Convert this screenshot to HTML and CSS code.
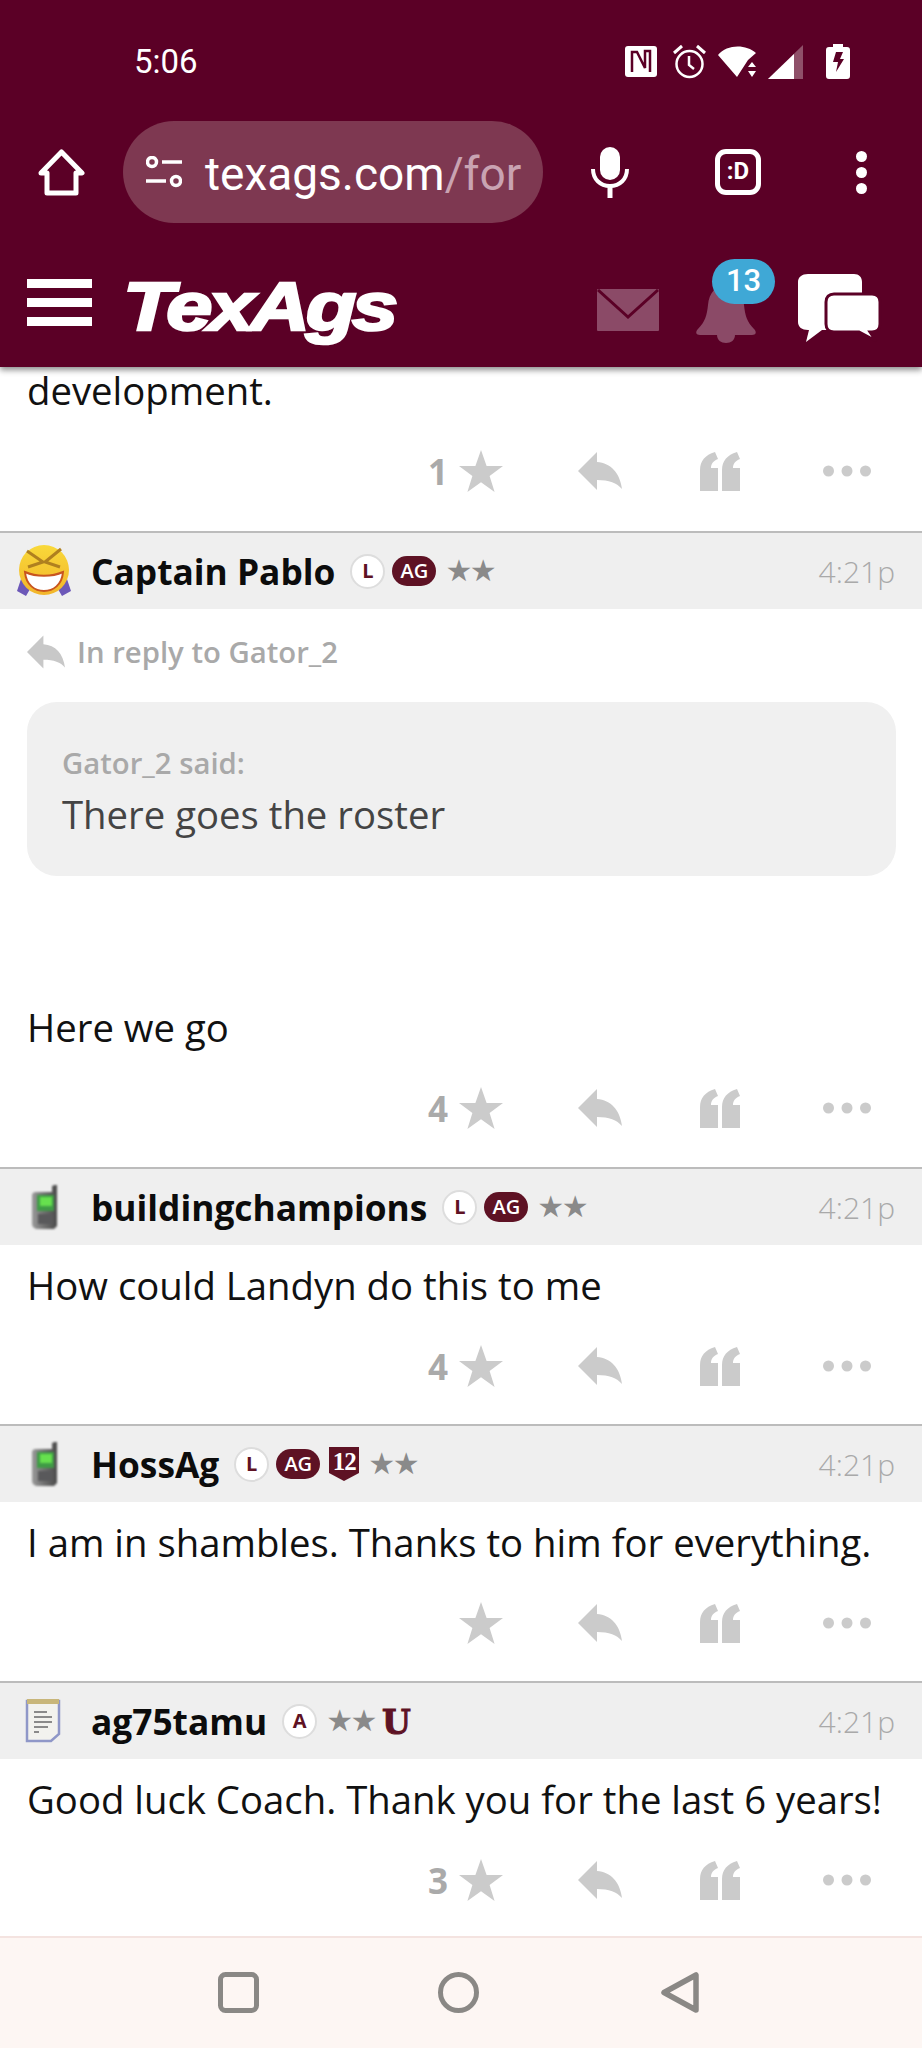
FILE: index.html
```html
<!DOCTYPE html>
<html lang="en">
<head>
    <meta charset="UTF-8">
    <meta name="viewport" content="width=device-width, initial-scale=1.0">
    <title>TexAgs</title>
    <link rel="stylesheet" href="styles.css">
</head>
<body>
    <!-- shared action icons -->
    <svg class="sprites" aria-hidden="true">
        <defs>
            <linearGradient id="phone-body" x1="0" y1="0" x2="1" y2="0">
                <stop offset="0" stop-color="#9a9a9a"/>
                <stop offset="0.5" stop-color="#6f6f6f"/>
                <stop offset="1" stop-color="#4a4a4a"/>
            </linearGradient>
            <linearGradient id="face" x1="0" y1="0" x2="0" y2="1">
                <stop offset="0" stop-color="#f9d93a"/>
                <stop offset="1" stop-color="#f2b52a"/>
            </linearGradient>
        </defs>
        <symbol id="i-star" viewBox="0 0 44 42"><path d="M22 0l5.600 16H44L30.600 26l5 16L22 32.200 8.400 42l5-16L0 16h16.400z"/></symbol>
        <symbol id="i-reply" viewBox="0 0 44 38"><path d="M19 0v10c14 1 23 11 25 27-5-6-13-9-25-9v10L0 19z"/></symbol>
        <symbol id="i-quote" viewBox="0 0 40 39"><path d="M0 39V18C0 9 5 3 15 0l3 7c-5 2-7 5-7 9h7v23zM22 39V18c0-9 5-15 15-18l3 7c-5 2-7 5-7 9h7v23z"/></symbol>
        <symbol id="i-dots" viewBox="0 0 48 12"><circle cx="5.500" cy="6" r="5.500"/><circle cx="24" cy="6" r="5.500"/><circle cx="42.500" cy="6" r="5.500"/></symbol>
        <symbol id="i-phone" viewBox="0 0 26 44">
            <path d="M20 1l5-2v42l-3 3H6c-3 0-6-2-6-5V10c0-2 2-3 4-3h16z" fill="url(#phone-body)"/>
            <rect x="5" y="10" width="17" height="16" fill="#3f9b45"/>
            <rect x="8" y="12" width="12" height="9" fill="#66e04e"/>
            <rect x="6" y="29" width="15" height="10" fill="#59595b"/>
        </symbol>
    </svg>

    <header class="top">
        <div class="status">
            <span class="clock">5:06</span>
            <div class="status-icons">
                <svg width="32" height="31" viewBox="0 0 32 31"><rect width="32" height="31" rx="3" fill="#fff"/><path d="M7 26V6h5l8 16V5h5v21" fill="none" stroke="#5b0026" stroke-width="2.500"/></svg>
                <svg width="33" height="35" viewBox="0 0 33 35"><circle cx="16.500" cy="20" r="13" fill="none" stroke="#fff" stroke-width="2.500"/><path d="M16 12v9l5 4" fill="none" stroke="#fff" stroke-width="2.500"/><path d="M1 9l8-7M32 9l-8-7" stroke="#fff" stroke-width="3"/></svg>
                <svg width="39" height="32" viewBox="0 0 39 32"><path d="M0 9C9-2 28-2 38 7l-8 7-11 17z" fill="#fff"/><path d="M34 16l4 5h-8zM34 31l4-6h-8z" fill="#fff"/></svg>
                <svg width="35" height="34" viewBox="0 0 35 34"><path d="M35 0v34H0z" fill="#8f5069"/><path d="M26 9v25H0z" fill="#fff"/></svg>
                <svg width="24" height="35" viewBox="0 0 24 35"><path d="M7 0h10v3h4c2 0 3 1 3 3v26c0 2-1 3-3 3H3c-2 0-3-1-3-3V6c0-2 1-3 3-3h4z" fill="#fff"/><path d="M10 8h7l-3 7h4l-8 13 2-10H7z" fill="#5b0026"/></svg>
            </div>
        </div>

        <div class="toolbar">
            <svg class="home" width="47" height="47" viewBox="0 0 47 47"><path d="M23.500 3L44 24h-6v20H9V24H3z" fill="none" stroke="#fff" stroke-width="5" stroke-linejoin="round"/></svg>
            <div class="url">
                <svg width="36" height="32" viewBox="0 0 36 32"><circle cx="6" cy="6" r="4.500" fill="none" stroke="#fff" stroke-width="3.500"/><path d="M16 6h20M0 25h20" stroke="#fff" stroke-width="3.500"/><circle cx="30" cy="25" r="4.500" fill="none" stroke="#fff" stroke-width="3.500"/></svg>
                <span class="url-text">texags.com<span class="url-path">/for</span></span>
            </div>
            <svg class="mic" width="38" height="51" viewBox="0 0 38 51"><rect x="9" y="0" width="20" height="33" rx="10" fill="#fff"/><path d="M2 22c0 10 7 17 17 17s17-7 17-17" fill="none" stroke="#fff" stroke-width="4"/><path d="M19 38v13" stroke="#fff" stroke-width="5"/></svg>
            <div class="tabs">:D</div>
            <div class="kebab"><i></i><i></i><i></i></div>
        </div>

        <nav class="site">
            <div class="burger"><i></i><i></i><i></i></div>
            <span class="logo">TexAgs</span>
            <svg class="mail" width="62" height="42" viewBox="0 0 62 42"><rect width="62" height="42" rx="1" fill="#8b4a67"/><path d="M1 1l30 27L61 1" fill="none" stroke="#5b0026" stroke-width="3"/></svg>
            <div class="bell">
                <svg width="62" height="58" viewBox="0 0 62 58"><path d="M31 0c10 0 17 8 18 20 1 10 3 17 10 24 3 3 2 6-2 6H5c-4 0-5-3-2-6 7-7 9-14 10-24C14 8 21 0 31 0z" fill="#8b4a67"/><path d="M22 50h18c0 5-4 8-9 8s-9-3-9-8z" fill="#8b4a67"/></svg>
                <span class="badge">13</span>
            </div>
            <svg class="chat" width="82" height="67" viewBox="0 0 82 67"><path d="M10 0h46c5 0 8 3 8 8v40c0 5-3 8-8 8H24L8 68l3-12h-1C4 56 0 53 0 48V8c0-5 4-8 10-8z" fill="#fff"/><path d="M36 20h38c5 0 8 3 8 8v22c0 5-3 8-8 8h-2l6 9-17-9H36c-5 0-8-3-8-8V28c0-5 3-8 8-8z" fill="#fff" stroke="#5b0026" stroke-width="3"/></svg>
        </nav>
    </header>

    <main class="thread">
        <article class="post post-cut">
            <p class="msg">development.</p>
            <div class="actions">
                <span class="likes"><b>1</b><svg class="act-star"><use href="#i-star"/></svg></span>
                <svg class="act-reply"><use href="#i-reply"/></svg>
                <svg class="act-quote"><use href="#i-quote"/></svg>
                <svg class="act-dots"><use href="#i-dots"/></svg>
            </div>
        </article>

        <article class="post">
            <div class="head">
                <svg class="avatar" width="56" height="56" viewBox="0 0 56 56">
                    <path d="M7 30L1 48l9 5 7-12zM49 30l6 18-9 5-7-12z" fill="#6c58b8"/>
                    <circle cx="28" cy="27" r="25" fill="url(#face)"/>
                    <path d="M11 8l16 11-15 5M45 6L29 19l15 5" fill="none" stroke="#b0801f" stroke-width="3"/>
                    <path d="M9 29c11 5 27 5 38 0-1 13-10 19-19 19S10 42 9 29z" fill="#fff" stroke="#c8551f" stroke-width="2"/>
                </svg>
                <span class="name">Captain Pablo</span>
                <span class="badges">
                    <span class="tag-round">L</span>
                    <span class="tag-ag">AG</span>
                    <span class="stars">★★</span>
                </span>
                <time>4:21p</time>
            </div>
            <div class="body">
                <div class="reply-to">
                    <svg class="reply-icon"><use href="#i-reply"/></svg>
                    <span>In reply to Gator_2</span>
                </div>
                <blockquote class="quote">
                    <div class="quote-by">Gator_2 said:</div>
                    <div class="quote-text">There goes the roster</div>
                </blockquote>
                <p class="msg">Here we go</p>
                <div class="actions">
                    <span class="likes"><b>4</b><svg class="act-star"><use href="#i-star"/></svg></span>
                    <svg class="act-reply"><use href="#i-reply"/></svg>
                    <svg class="act-quote"><use href="#i-quote"/></svg>
                    <svg class="act-dots"><use href="#i-dots"/></svg>
                </div>
            </div>
        </article>

        <article class="post">
            <div class="head">
                <svg class="avatar avatar-phone" width="56" height="44"><use href="#i-phone" x="16" width="26" height="44"/></svg>
                <span class="name">buildingchampions</span>
                <span class="badges">
                    <span class="tag-round">L</span>
                    <span class="tag-ag">AG</span>
                    <span class="stars">★★</span>
                </span>
                <time>4:21p</time>
            </div>
            <div class="body">
                <p class="msg">How could Landyn do this to me</p>
                <div class="actions">
                    <span class="likes"><b>4</b><svg class="act-star"><use href="#i-star"/></svg></span>
                    <svg class="act-reply"><use href="#i-reply"/></svg>
                    <svg class="act-quote"><use href="#i-quote"/></svg>
                    <svg class="act-dots"><use href="#i-dots"/></svg>
                </div>
            </div>
        </article>

        <article class="post">
            <div class="head">
                <svg class="avatar avatar-phone" width="56" height="44"><use href="#i-phone" x="16" width="26" height="44"/></svg>
                <span class="name">HossAg</span>
                <span class="badges">
                    <span class="tag-round">L</span>
                    <span class="tag-ag">AG</span>
                    <span class="tag-shield">
                        <svg width="30" height="34" viewBox="0 0 30 34"><path d="M0 0h30v26l-15 8-15-8z" fill="#5e1224"/></svg>
                        <span>12</span>
                    </span>
                    <span class="stars">★★</span>
                </span>
                <time>4:21p</time>
            </div>
            <div class="body">
                <p class="msg">I am in shambles. Thanks to him for everything.</p>
                <div class="actions">
                    <span class="likes"><svg class="act-star"><use href="#i-star"/></svg></span>
                    <svg class="act-reply"><use href="#i-reply"/></svg>
                    <svg class="act-quote"><use href="#i-quote"/></svg>
                    <svg class="act-dots"><use href="#i-dots"/></svg>
                </div>
            </div>
        </article>

        <article class="post">
            <div class="head">
                <svg class="avatar" width="56" height="46" viewBox="0 0 56 46">
                    <path d="M11 3h32v33l-8 7H11z" fill="#f2f2ee" stroke="#8f97c8" stroke-width="2.500"/>
                    <path d="M11 1h32v5H11z" fill="#c8b67a"/>
                    <path d="M18 14h13M18 19h18M18 24h18M18 29h14M18 34h5" stroke="#8a8a8a" stroke-width="2"/>
                </svg>
                <span class="name">ag75tamu</span>
                <span class="badges">
                    <span class="tag-round">A</span>
                    <span class="stars">★★</span>
                    <span class="tag-u">U</span>
                </span>
                <time>4:21p</time>
            </div>
            <div class="body">
                <p class="msg">Good luck Coach. Thank you for the last 6 years!</p>
                <div class="actions">
                    <span class="likes"><b>3</b><svg class="act-star"><use href="#i-star"/></svg></span>
                    <svg class="act-reply"><use href="#i-reply"/></svg>
                    <svg class="act-quote"><use href="#i-quote"/></svg>
                    <svg class="act-dots"><use href="#i-dots"/></svg>
                </div>
            </div>
        </article>
    </main>

    <footer class="sysnav">
        <svg width="41" height="41" viewBox="0 0 41 41"><rect x="2.500" y="2.500" width="36" height="36" rx="5" fill="none" stroke="#8a8885" stroke-width="5"/></svg>
        <svg width="41" height="41" viewBox="0 0 41 41"><circle cx="20.500" cy="20.500" r="18" fill="none" stroke="#8a8885" stroke-width="5"/></svg>
        <svg class="nav-back" width="38" height="41" viewBox="0 0 38 41"><path d="M35 3v35L3 20.500z" fill="none" stroke="#8a8885" stroke-width="5.500" stroke-linejoin="round"/></svg>
    </footer>
</body>
</html>
```

FILE: styles.css
```css
* {
    box-sizing: border-box;
}
html, body {
    margin: 0;
    padding: 0;
}
body {
    width: 922px;
    height: 2048px;
    display: flex;
    flex-direction: column;
    overflow: hidden;
    background: white;
    color: #111;
    font-family: "Open Sans", "Liberation Sans", sans-serif;
}
.sprites {
    position: absolute;
    width: 0;
    height: 0;
}

/* maroon block at the top */
.top {
    position: relative;
    z-index: 2;
    height: 367px;
    flex: none;
    background-color: #5b0026;
    box-shadow: 0 3px 6px rgba(0,0,0,0.45);
    color: white;
}
.status {
    height: 100px;
    display: flex;
    align-items: center;
    justify-content: space-between;
    padding: 23px 72px 0 134px;
}
.clock {
    font-family: Roboto, sans-serif;
    font-size: 33px;
}
.status-icons {
    display: flex;
    align-items: center;
}
.status-icons svg:nth-child(1) { margin-right: 16px; }
.status-icons svg:nth-child(2) { margin-right: 12px; }
.status-icons svg:nth-child(3) { margin-right: 11px; }
.status-icons svg:nth-child(4) { margin-right: 23px; }

.toolbar {
    height: 144px;
    display: flex;
    align-items: center;
    padding-left: 38px;
}
.url {
    width: 420px;
    height: 102px;
    margin-left: 38px;
    padding: 0 20px 0 23px;
    display: flex;
    align-items: center;
    gap: 23px;
    border-radius: 51px;
    background-color: #7e3851;
    overflow: hidden;
}
.url svg {
    flex: none;
}
.url-text {
    padding-top: 3px;
    font-family: Roboto, sans-serif;
    font-size: 46px;
    white-space: nowrap;
}
.url-path {
    color: #c9a3b2;
}
.mic {
    margin-left: 48px;
}
.tabs {
    width: 46px;
    height: 46px;
    margin-left: 86px;
    border: 5px solid white;
    border-radius: 11px;
    font-family: Roboto, sans-serif;
    font-size: 24px;
    font-weight: 700;
    line-height: 35px;
    text-align: center;
}
.kebab {
    margin-left: 95px;
    display: flex;
    flex-direction: column;
    gap: 5px;
}
.kebab i {
    display: block;
    width: 11px;
    height: 11px;
    border-radius: 50%;
    background: white;
}

.site {
    position: relative;
    height: 123px;
    display: flex;
    align-items: center;
    padding-left: 27px;
}
.burger {
    width: 65px;
    margin-top: -6px;
    display: flex;
    flex-direction: column;
    gap: 10px;
}
.burger i {
    display: block;
    height: 9px;
    background: white;
}
.logo {
    width: 273px;
    margin-left: 31px;
    margin-right: 4px;
    font-family: "Liberation Sans", sans-serif;
    font-size: 68px;
    font-style: italic;
    font-weight: 700;
    line-height: 70px;
    letter-spacing: -3.500px;
    -webkit-text-stroke: 2.500px white;
    transform: scaleX(1.22);
    transform-origin: left center;
}
.mail {
    margin-left: 197px;
    margin-top: 8px;
}
.bell {
    position: relative;
    margin-left: 36px;
    margin-top: 16px;
    width: 62px;
    height: 58px;
}
.bell svg {
    display: block;
}
.badge {
    position: absolute;
    top: -26px;
    left: 17px;
    width: 63px;
    height: 45px;
    border-radius: 23px;
    background-color: #3fa8d6;
    font-family: Roboto, sans-serif;
    font-size: 31px;
    font-weight: 500;
    line-height: 43px;
    text-align: center;
}
.chat {
    margin-left: 41px;
    margin-top: 3px;
    overflow: visible;
}

/* thread */
.thread {
    flex: 1;
    overflow: hidden;
}
.msg {
    margin: 0;
    font-size: 38.300px;
    line-height: 52px;
}
.post-cut {
    padding: 0 27px;
}
.post-cut .msg {
    line-height: 46px;
}
.post-cut .actions {
    margin-top: 38px;
    margin-right: -27px;
    margin-bottom: 40px;
}
.head {
    height: 78px;
    display: flex;
    align-items: center;
    border-top: 2px solid #bcbcbc;
    background-color: #efefef;
    padding-left: 16px;
    padding-right: 27px;
}
.avatar {
    flex: none;
    margin-right: 19px;
}
.avatar-phone {
    filter: blur(0.8px);
}
.name {
    font-size: 35.300px;
    font-weight: 700;
    color: #0c0c0c;
}
.badges {
    display: flex;
    align-items: center;
    margin-left: 15px;
    gap: 7px;
}
.tag-round {
    flex: none;
    width: 35px;
    height: 35px;
    border-radius: 50%;
    border: 2px solid #ddd;
    background: white;
    color: #5e1224;
    font-size: 20px;
    font-weight: 700;
    line-height: 30px;
    text-align: center;
}
.tag-ag {
    flex: none;
    width: 44px;
    height: 30px;
    border-radius: 15px;
    background-color: #5e1224;
    color: white;
    font-size: 20px;
    font-weight: 600;
    line-height: 30px;
    text-align: center;
}
.tag-shield {
    position: relative;
    width: 30px;
    height: 34px;
    margin-left: 2px;
}
.tag-shield svg {
    display: block;
}
.tag-shield span {
    position: absolute;
    left: 0;
    right: 0;
    top: 0;
    color: white;
    font-family: "Liberation Serif", serif;
    font-size: 25px;
    font-weight: 700;
    line-height: 30px;
    letter-spacing: -1px;
    text-align: center;
}
.tag-u {
    margin-top: 3px;
    color: #5e1224;
    font-family: "DejaVu Serif", serif;
    font-size: 33px;
    font-weight: 700;
    line-height: 34px;
    -webkit-text-stroke: 1px #5e1224;
}
.stars {
    margin-left: 2px;
    color: #8a8a8a;
    font-family: "DejaVu Sans", sans-serif;
    font-size: 30px;
    line-height: 30px;
    letter-spacing: -2.500px;
}
time {
    margin-left: auto;
    color: #a9a9a9;
    font-size: 30px;
    font-weight: 300;
}
.body {
    height: 179px;
    padding: 14px 0 0 27px;
}
.body:has(.quote) {
    height: auto;
    padding-bottom: 39px;
}
.reply-to {
    display: flex;
    align-items: center;
    gap: 12px;
    height: 34px;
    margin-top: 12px;
    color: #a9a9a9;
    font-size: 29.300px;
    font-weight: 600;
}
.reply-icon {
    width: 38px;
    height: 34px;
    fill: #c8c8c8;
}
.quote {
    margin: 33px 26px 0 0;
    height: 174px;
    padding: 41px 35px 0;
    border-radius: 30px;
    background-color: #f0f0f0;
}
.quote-by {
    color: #a9a9a9;
    font-size: 29.300px;
    font-weight: 600;
    line-height: 40px;
}
.quote-text {
    color: #444;
    font-size: 38.300px;
    line-height: 62px;
}
.quote + .msg {
    margin-top: 125px;
}

/* star, reply, quote and more */
.actions {
    height: 40px;
    margin-top: 35px;
    display: flex;
    align-items: center;
    justify-content: flex-end;
    padding-right: 51px;
    fill: #cbcbcb;
}
.likes {
    display: flex;
    align-items: center;
    gap: 11px;
    color: #aaa;
    font-size: 35px;
}
.likes b {
    font-weight: 700;
}
.act-star {
    width: 44px;
    height: 42px;
}
.act-reply {
    width: 44px;
    height: 38px;
    margin-left: 75px;
}
.act-quote {
    width: 40px;
    height: 39px;
    margin-left: 78px;
}
.act-dots {
    width: 48px;
    height: 12px;
    margin-left: 83px;
}

.sysnav {
    height: 112px;
    flex: none;
    display: flex;
    align-items: center;
    padding-left: 218px;
    padding-bottom: 2px;
    gap: 179px;
    border-top: 2px solid #f4e3e0;
    background-color: #fdf6f3;
}
.nav-back {
    margin-left: 3px;
}
```
